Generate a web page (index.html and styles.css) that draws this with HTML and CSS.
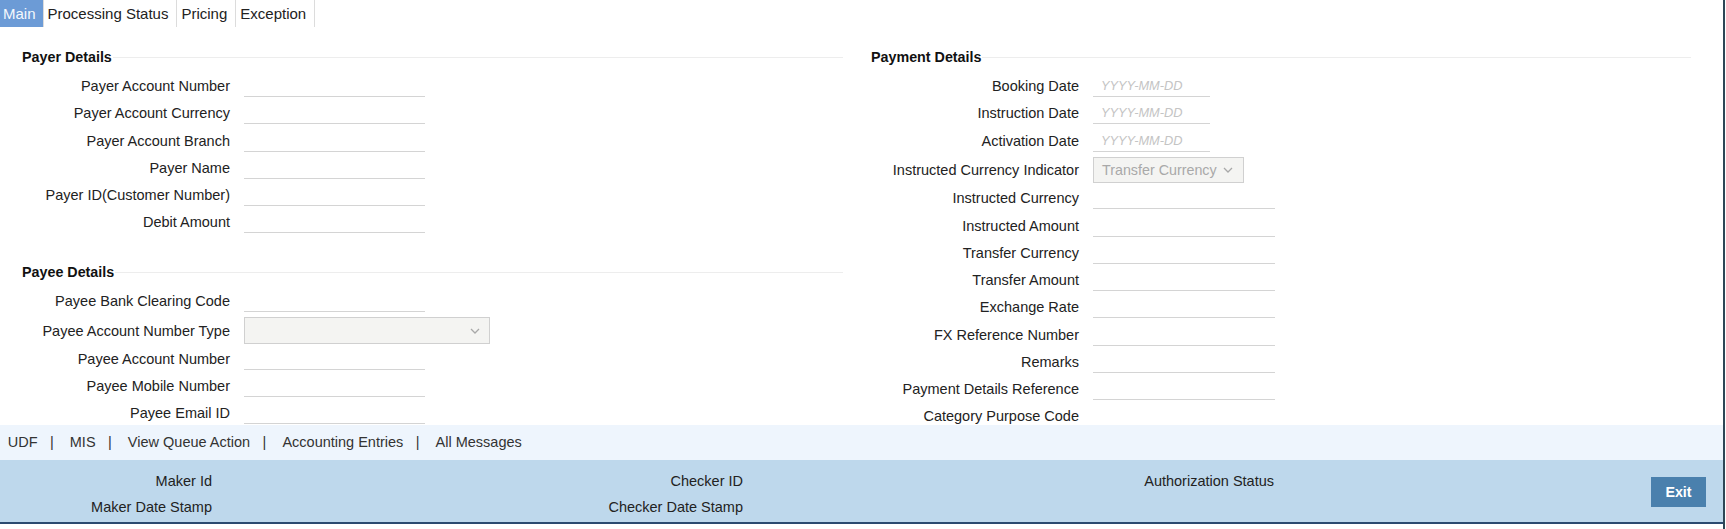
FILE: index.html
```html
<!DOCTYPE html>
<html lang="en">
<head>
<meta charset="utf-8">
<title>Payment</title>
<link rel="stylesheet" href="styles.css">
</head>
<body>
<div class="window">
  <nav class="tabs">
    <span class="tab tab-active">Main</span>
    <span class="tab">Processing Status</span>
    <span class="tab">Pricing</span>
    <span class="tab">Exception</span>
  </nav>

  <main class="content">
    <div class="col">
      <section class="group">
        <h2 class="group-title">Payer Details</h2>
        <div class="row"><span class="label">Payer Account Number</span><span class="field"></span></div>
        <div class="row"><span class="label">Payer Account Currency</span><span class="field"></span></div>
        <div class="row"><span class="label">Payer Account Branch</span><span class="field"></span></div>
        <div class="row"><span class="label">Payer Name</span><span class="field"></span></div>
        <div class="row"><span class="label">Payer ID(Customer Number)</span><span class="field"></span></div>
        <div class="row"><span class="label">Debit Amount</span><span class="field"></span></div>
      </section>
      <section class="group group-next">
        <h2 class="group-title">Payee Details</h2>
        <div class="row"><span class="label">Payee Bank Clearing Code</span><span class="field"></span></div>
        <div class="row row-select"><span class="label">Payee Account Number Type</span>
          <span class="select select-wide"><span class="select-text"></span>
            <svg class="chev" width="10" height="6" viewBox="0 0 10 6"><polyline points="1,1 5,5 9,1" fill="none" stroke="#a8a8a8" stroke-width="1.3"/></svg>
          </span>
        </div>
        <div class="row"><span class="label">Payee Account Number</span><span class="field"></span></div>
        <div class="row"><span class="label">Payee Mobile Number</span><span class="field"></span></div>
        <div class="row"><span class="label">Payee Email ID</span><span class="field"></span></div>
      </section>
    </div>

    <div class="col">
      <section class="group">
        <h2 class="group-title">Payment Details</h2>
        <div class="row"><span class="label">Booking Date</span><span class="field field-date">YYYY-MM-DD</span></div>
        <div class="row"><span class="label">Instruction Date</span><span class="field field-date">YYYY-MM-DD</span></div>
        <div class="row"><span class="label">Activation Date</span><span class="field field-date">YYYY-MM-DD</span></div>
        <div class="row row-select"><span class="label">Instructed Currency Indicator</span>
          <span class="select select-small"><span class="select-text">Transfer Currency</span>
            <svg class="chev" width="10" height="6" viewBox="0 0 10 6"><polyline points="1,1 5,5 9,1" fill="none" stroke="#a8a8a8" stroke-width="1.3"/></svg>
          </span>
        </div>
        <div class="row"><span class="label">Instructed Currency</span><span class="field"></span></div>
        <div class="row"><span class="label">Instructed Amount</span><span class="field"></span></div>
        <div class="row"><span class="label">Transfer Currency</span><span class="field"></span></div>
        <div class="row"><span class="label">Transfer Amount</span><span class="field"></span></div>
        <div class="row"><span class="label">Exchange Rate</span><span class="field"></span></div>
        <div class="row"><span class="label">FX Reference Number</span><span class="field"></span></div>
        <div class="row"><span class="label">Remarks</span><span class="field"></span></div>
        <div class="row"><span class="label">Payment Details Reference</span><span class="field"></span></div>
        <div class="row"><span class="label">Category Purpose Code</span><span class="field"></span></div>
      </section>
    </div>
  </main>

  <div class="linkbar">
    <span>UDF</span><span class="sep">|</span><span>MIS</span><span class="sep">|</span><span>View Queue Action</span><span class="sep">|</span><span>Accounting Entries</span><span class="sep">|</span><span>All Messages</span>
  </div>

  <footer class="audit">
    <span class="a-label a-c1 a-r1">Maker Id</span>
    <span class="a-label a-c1 a-r2">Maker Date Stamp</span>
    <span class="a-label a-c2 a-r1">Checker ID</span>
    <span class="a-label a-c2 a-r2">Checker Date Stamp</span>
    <span class="a-label a-c3 a-r1">Authorization Status</span>
    <button class="exit" type="button">Exit</button>
  </footer>
</div>
</body>
</html>
```

FILE: styles.css
```css
html, body {
  margin: 0;
  padding: 0;
  background: #ffffff;
}

body {
  font-family: "Liberation Sans", Arial, sans-serif;
  font-size: 14.5px;
  color: #222;
}

.window {
  width: 1723px;
  height: 529px;
  border-right: 2px solid #2e4656;
  display: flex;
  flex-direction: column;
  overflow: hidden;
}

/* Tabs */
.tabs {
  display: flex;
  height: 27px;
  flex: none;
}

.tab {
  font-size: 15px;
  line-height: 27px;
  padding: 0 8px 0 4px;
  border-right: 1px solid #dcdcdc;
  color: #222;
  white-space: nowrap;
}

.tab-active {
  background: #6c9bd6;
  color: #f4f8fd;
  padding: 0 7px 0 3px;
}

/* Content */
.content {
  height: 398px;
  flex: none;
  overflow: hidden;
  padding: 20px 0 0 22px;
  display: grid;
  grid-template-columns: 821px 820px;
  column-gap: 28px;
  align-items: start;
  box-sizing: border-box;
}

.group-title {
  display: flex;
  align-items: center;
  height: 20px;
  margin: 0 0 6px 0;
  font-size: 14.3px;
  font-weight: bold;
  color: #111;
  white-space: nowrap;
}

.group-title::after {
  content: "";
  flex: 1;
  height: 1px;
  background: #ededed;
  margin-left: 1px;
}

.group-next {
  margin-top: 25.5px;
}

.row {
  display: flex;
  align-items: flex-start;
  height: 27.25px;
}

.row-select {
  height: 30.5px;
  align-items: center;
}

.label {
  width: 208px;
  flex: none;
  text-align: right;
  line-height: 27.25px;
  white-space: nowrap;
  color: #222;
}

.row-select .label {
  line-height: 20px;
}

.field {
  margin-left: 14px;
  width: 181px;
  height: 24px;
  box-sizing: border-box;
  border-bottom: 1px solid #d4d4d4;
}

.col:last-child .field {
  width: 182px;
}

.col:last-child .field.field-date {
  width: 117px;
  padding-left: 8px;
  font-size: 12.8px;
  font-style: italic;
  color: #c4c4c4;
  line-height: 25px;
}

.select {
  margin-left: 14px;
  box-sizing: border-box;
  border: 1px solid #d0d0d0;
  background: #f4f4f2;
  display: flex;
  align-items: center;
  justify-content: space-between;
}

.select-wide {
  width: 246px;
  height: 27px;
  padding: 0 9px 0 9px;
}

.select-small {
  width: 151px;
  height: 26px;
  padding: 0 10px 0 8px;
}

.select-text {
  color: #a9a9a9;
  white-space: nowrap;
  font-size: 14.3px;
}

.chev {
  flex: none;
  display: block;
}

/* Link bar */
.linkbar {
  height: 35px;
  flex: none;
  background: #eef5fd;
  line-height: 35px;
  padding-left: 7.7px;
  color: #333;
  white-space: nowrap;
}

.sep {
  margin: 0 16px 0 12.5px;
}

/* Audit footer */
.audit {
  height: 64px;
  flex: none;
  box-sizing: border-box;
  background: #bed8ec;
  border-bottom: 2px solid #2b4a70;
  padding: 8px 17px 0 0;
  display: grid;
  grid-template-columns: 212px 531px 531px 1fr 55px;
  grid-template-rows: 26px 26px;
}

.a-label {
  text-align: right;
  line-height: 26px;
  color: #222;
  white-space: nowrap;
}

.a-c1 { grid-column: 1; }
.a-c2 { grid-column: 2; }
.a-c3 { grid-column: 3; }
.a-r1 { grid-row: 1; }
.a-r2 { grid-row: 2; }

.exit {
  grid-column: 5;
  grid-row: 1 / span 2;
  align-self: start;
  margin-top: 9px;
  height: 30px;
  width: 55px;
  border: 0;
  padding: 0;
  background: #4a80ad;
  color: #ffffff;
  font-family: "Liberation Sans", Arial, sans-serif;
  font-weight: bold;
  font-size: 14.3px;
}
```
